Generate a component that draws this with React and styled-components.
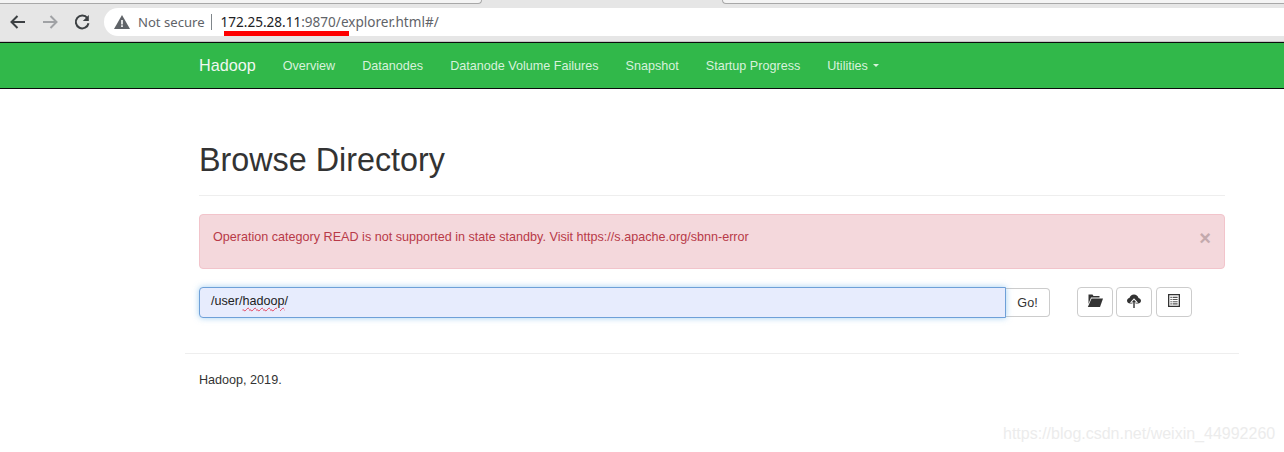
import React from 'react';
import styled, { createGlobalStyle } from 'styled-components';

const GlobalStyle = createGlobalStyle`
    html, body {
        margin: 0;
        padding: 0;
        background: #fff;
    }
    body {
        width: 1284px;
        height: 452px;
        overflow: hidden;
        font-family: "Liberation Sans", Arial, sans-serif;
        font-size: 12.6px;
        color: #333;
        position: relative;
    }
`;

const Chrome = styled.div`
    height: 42px;
    box-sizing: border-box;
    background: #e6e6e6;
    border-bottom: 1px solid #c4c4c4;
`;

const TabStrip = styled.div`
    height: 8px;
    display: flex;
    justify-content: space-between;
`;

const TabEdge = styled.div`
    box-sizing: border-box;
    height: 4px;
    width: ${p => p.$width}px;
    background: #f4f4f4;
    border-bottom: 1px solid #a8a8a8;
    border-left: ${p => p.$right ? '1px solid #a8a8a8' : 'none'};
    border-right: ${p => p.$right ? 'none' : '1px solid #a8a8a8'};
    border-radius: ${p => p.$right ? '0 0 0 5px' : '0 0 5px 0'};
`;

const ToolRow = styled.div`
    display: flex;
    align-items: center;
    height: 28px;
    padding-left: 8px;
`;

const NavIcon = styled.svg`
    width: 20px;
    height: 20px;
    margin-right: 12px;
    flex: none;
    fill: none;
    stroke: ${p => p.$color};
    stroke-width: 2;
`;

const Omnibox = styled.div`
    flex: 1;
    height: 28px;
    background: #fff;
    border-radius: 14px 0 0 14px;
    display: flex;
    align-items: center;
    padding-left: 10px;
    font-family: "Noto Sans", sans-serif;
    font-size: 13.55px;
    position: relative;
`;

const NotSecure = styled.span`
    color: #5f6368;
    margin-left: 8px;
    font-size: 13.1px;
`;

const Divider = styled.span`
    width: 1px;
    height: 16px;
    background: #80868b;
    margin: 0 9px 0 6px;
`;

const UrlHost = styled.span`
    color: #202124;
`;

const UrlRest = styled.span`
    color: #5f6368;
`;

const RedMark = styled.div`
    position: absolute;
    left: 120px;
    top: 23px;
    width: 125px;
    height: 5px;
    background: #fe0000;
`;

const Navbar = styled.nav`
    background: #31b84a;
    border-top: 1px solid #0c0c0c;
    border-bottom: 1px solid #0c0c0c;
`;

const NavInner = styled.div`
    width: 1054px;
    margin-left: 185px;
    box-sizing: border-box;
    padding-left: 14px;
    display: flex;
    align-items: center;
    height: 45px;
`;

const Brand = styled.a`
    color: #f0f7f0;
    font-size: 16.2px;
    margin-right: 27px;
`;

const NavLink = styled.a`
    color: #d8f2dc;
    font-size: 12.6px;
    margin-right: 27px;
    display: flex;
    align-items: center;
`;

const Caret = styled.span`
    display: inline-block;
    margin-left: 5px;
    width: 0;
    height: 0;
    border-top: 3.5px solid #d8f2dc;
    border-left: 3.5px solid transparent;
    border-right: 3.5px solid transparent;
`;

const Container = styled.main`
    width: 1054px;
    margin-left: 185px;
    box-sizing: border-box;
    padding: 0 14px;
`;

const PageHeader = styled.div`
    margin-top: 48px;
    height: 58px;
    border-bottom: 1px solid #eee;
`;

const Title = styled.h1`
    margin: 0;
    font-size: 32.3px;
    line-height: 46px;
    color: #333;
    font-weight: 400;
`;

const Alert = styled.div`
    margin-top: 18px;
    box-sizing: border-box;
    height: 55px;
    background: #f4d8dc;
    border: 1px solid #f2c4cb;
    border-radius: 4px;
    color: #b83a48;
    padding: 13px;
    line-height: 18px;
    display: flex;
    justify-content: space-between;
`;

const Close = styled.span`
    color: #c3a9ad;
    font-size: 20px;
    font-weight: 700;
    line-height: 18px;
    margin: 1px 0 0 0;
`;

const ActionRow = styled.div`
    display: flex;
    margin-top: 18px;
    align-items: flex-start;
`;

const PathInput = styled.div`
    box-sizing: border-box;
    width: 807px;
    height: 31px;
    background: #e7ecfd;
    border: 1px solid #6ea0d8;
    border-radius: 4px 0 0 4px;
    box-shadow: 0 0 6px rgba(102, 175, 233, 0.6);
    padding: 0 11px;
    line-height: 27px;
    color: #222;
    position: relative;
    z-index: 1;
`;

const Misspelled = styled.span`
    text-decoration: underline wavy #e4405a 1px;
    text-underline-offset: 2px;
`;

const GoButton = styled.button`
    box-sizing: border-box;
    width: 44px;
    height: 29px;
    margin-top: 1px;
    background: #fff;
    border: 1px solid #ccc;
    border-left: none;
    border-radius: 0 4px 4px 0;
    font-family: inherit;
    font-size: 12.6px;
    color: #333;
    padding: 0;
`;

const Tools = styled.div`
    display: flex;
    gap: 3px;
    margin-left: 27px;
`;

const ToolButton = styled.button`
    box-sizing: border-box;
    width: 36px;
    height: 30px;
    background: #fff;
    border: 1px solid #ccc;
    border-radius: 4px;
    padding: 0 0 3px;
    display: flex;
    align-items: center;
    justify-content: center;
    &:last-child {
        margin-left: 1px;
    }
`;

const Rule = styled.hr`
    width: 1054px;
    margin: 35px 0 0 185px;
    border: none;
    border-top: 1px solid #eee;
`;

const Footer = styled.p`
    margin: 17px 0 0 199px;
    line-height: 18px;
    color: #333;
`;

const Watermark = styled.div`
    position: absolute;
    left: 1003px;
    top: 425px;
    font-size: 16px;
    color: #ececec;
    white-space: nowrap;
`;

const FolderOpen = () => (
    <svg width="16" height="13" viewBox="0 0 16 13">
        <path fill="#333" d="M1.5 0.5h4l1 1.5h6v1.5H4L1.5 10z" />
        <path fill="#333" d="M4.5 4.5H16L13 13H0.8z" />
    </svg>
);

const CloudUpload = () => (
    <svg width="14" height="14" viewBox="0 0 14 14">
        <path fill="#333" d="M3.2 9.6C1.4 9.6 0 8.4 0 6.8 0 5.4 1 4.3 2.4 4.1 2.9 2 4.8 0.5 7 0.5c2.1 0 3.9 1.4 4.5 3.4C13 4.2 14 5.4 14 6.8c0 1.6-1.3 2.8-3.1 2.8z" />
        <path fill="#fff" d="M7 4.2L2.9 8.8h2.6V14h3V8.8h2.6z" />
        <path fill="#333" d="M7 5.8L4.8 8.2h1.5V14h1.4V8.2h1.5z" />
    </svg>
);

const ListAlt = () => (
    <svg width="12" height="13" viewBox="0 0 12 13">
        <path fill="#333" fillRule="evenodd" d="M0 0h12v13H0zM1.3 1.3v10.4h9.4V1.3z" />
        <path fill="#555" d="M2.4 2.8h1.4v1.1H2.4zM4.6 2.8h5v1.1h-5zM2.4 5h1.4v1.1H2.4zM4.6 5h5v1.1h-5zM2.4 7.2h1.4v1.1H2.4zM4.6 7.2h5v1.1h-5zM2.4 9.3h1.4v1.1H2.4zM4.6 9.3h5v1.1h-5z" />
    </svg>
);

const App = () => {
    return (
        <>
            <GlobalStyle />
            <Chrome>
                <TabStrip>
                    <TabEdge $width={482} />
                    <TabEdge $width={562} $right />
                </TabStrip>
                <ToolRow>
                    <NavIcon viewBox="0 0 20 20" $color="#3c4043">
                        <path d="M17 10H4M9.5 4L3.5 10l6 6" />
                    </NavIcon>
                    <NavIcon viewBox="0 0 20 20" $color="#a0a2a5">
                        <path d="M3 10h13M10.5 4l6 6-6 6" />
                    </NavIcon>
                    <NavIcon viewBox="0 0 20 20" $color="#3c4043">
                        <path d="M15.4 6.2a6.4 6.4 0 1 0 1.1 5" />
                        <path d="M16.8 3v6h-6" fill="#3c4043" stroke="none" />
                    </NavIcon>
                    <Omnibox>
                        <svg width="16" height="14" viewBox="0 0 16 14">
                            <path fill="#5f6368" d="M8 0l8 14H0z" />
                            <path fill="#fff" d="M7.2 5h1.6v4.5H7.2zM7.2 10.3h1.6V12H7.2z" />
                        </svg>
                        <NotSecure>Not secure</NotSecure>
                        <Divider />
                        <UrlHost>172.25.28.11</UrlHost>
                        <UrlRest>:9870/explorer.html#/</UrlRest>
                        <RedMark />
                    </Omnibox>
                </ToolRow>
            </Chrome>
            <Navbar>
                <NavInner>
                    <Brand>Hadoop</Brand>
                    <NavLink>Overview</NavLink>
                    <NavLink>Datanodes</NavLink>
                    <NavLink>Datanode Volume Failures</NavLink>
                    <NavLink>Snapshot</NavLink>
                    <NavLink>Startup Progress</NavLink>
                    <NavLink>Utilities<Caret /></NavLink>
                </NavInner>
            </Navbar>
            <Container>
                <PageHeader>
                    <Title>Browse Directory</Title>
                </PageHeader>
                <Alert>
                    <span>Operation category READ is not supported in state standby. Visit https://s.apache.org/sbnn-error</span>
                    <Close>×</Close>
                </Alert>
                <ActionRow>
                    <PathInput>/user/<Misspelled>hadoop</Misspelled>/</PathInput>
                    <GoButton>Go!</GoButton>
                    <Tools>
                        <ToolButton><FolderOpen /></ToolButton>
                        <ToolButton><CloudUpload /></ToolButton>
                        <ToolButton><ListAlt /></ToolButton>
                    </Tools>
                </ActionRow>
            </Container>
            <Rule />
            <Footer>Hadoop, 2019.</Footer>
            <Watermark>https://blog.csdn.net/weixin_44992260</Watermark>
        </>
    );
};

export default App;
